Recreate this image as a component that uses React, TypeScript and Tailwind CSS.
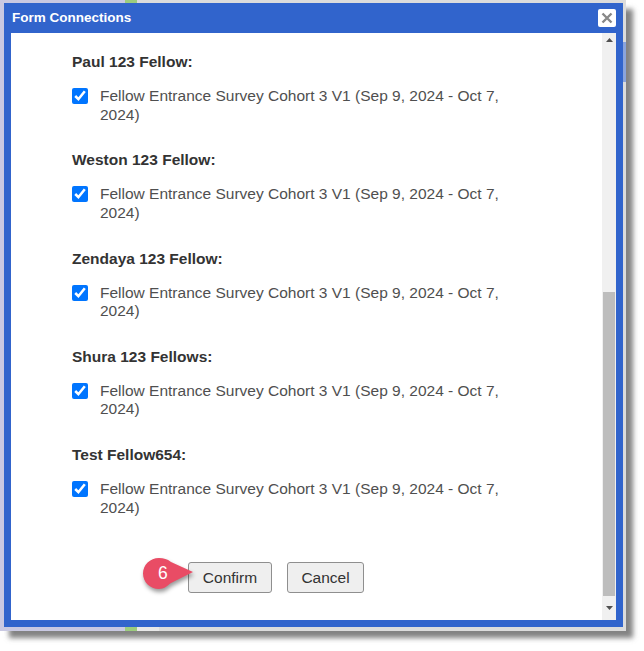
import React from "react";

const people = ["Paul 123 Fellow:", "Weston 123 Fellow:", "Zendaya 123 Fellow:", "Shura 123 Fellows:", "Test Fellow654:"];

function Block({ name }: { name: string }) {
  return (
    <div className="h-[98.25px] pl-[61px]">
      <div className="text-[15.5px] leading-[18px] font-bold text-[#333333]">{name}</div>
      <div className="mt-[16px] flex items-start">
        <input type="checkbox" defaultChecked readOnly className="mt-[1px] h-[16px] w-[16px] shrink-0 accent-[#0075ff]" />
        <span className="ml-[12px] w-[420px] text-[15.5px] leading-[18.5px] text-[#4f4f4f]">
          Fellow Entrance Survey Cohort 3 V1 (Sep 9, 2024 - Oct 7, 2024)
        </span>
      </div>
    </div>
  );
}

export default function App() {
  return (
    <div className="h-[651px] w-[644px] overflow-hidden bg-white font-['Liberation_Sans',Arial,sans-serif]">
      <div className="relative h-[631px] w-[626px] bg-[#dcdcdc] pt-[3px] pl-[4px] pr-[3px] pb-[4px] shadow-[8px_8px_5px_-1px_rgba(90,90,90,0.75)]">
        <div className="absolute left-0 top-0 h-[3px] w-[125px] bg-[#c9c9e2]" />
        <div className="absolute left-[125px] top-0 h-[3px] w-[12px] bg-[#9ccc7e]" />
        <div className="absolute left-0 top-0 h-full w-[4px] bg-[#c9c9e2]" />
        <div className="absolute bottom-0 left-0 h-[4px] w-[125px] bg-[#c9c9e2]" />
        <div className="absolute bottom-0 left-[125px] h-[4px] w-[12px] bg-[#9ccc7e]" />
        <div className="absolute bottom-0 left-[137px] h-[4px] w-[22px] bg-[#e8e8e8]" />
        <div className="absolute right-0 top-[42px] h-[40px] w-[3px] bg-[#8aa4dc]" />
        <div className="relative flex h-[624px] flex-col bg-[#3164cc]">
          <div className="flex h-[30px] shrink-0 items-center justify-between pl-[8px] pr-[7px]">
            <span className="text-[13.5px] font-bold text-white">Form Connections</span>
            <span className="flex h-[18px] w-[18px] items-center justify-center rounded-[2px] bg-white">
              <svg width="12" height="12" viewBox="0 0 12 12">
                <path d="M1.5 1.5 10.5 10.5M10.5 1.5 1.5 10.5" stroke="#888888" strokeWidth="2.4" />
              </svg>
            </span>
          </div>
          <div className="mx-[7px] flex h-[587px] bg-white">
            <div className="min-w-0 flex-1 pt-[20px]">
              {people.map((p) => (
                <Block key={p} name={p} />
              ))}
              <div className="relative mt-[18px] flex gap-[15px] pl-[177px]">
                <button className="h-[31px] w-[84px] rounded-[3px] border border-[#8f8f8f] bg-[#efefef] text-[15.5px] text-[#333333]">Confirm</button>
                <button className="h-[31px] w-[77px] rounded-[3px] border border-[#8f8f8f] bg-[#efefef] text-[15.5px] text-[#333333]">Cancel</button>
                <svg className="absolute left-[128px] top-[-6px] drop-shadow-[1px_3px_2px_rgba(0,0,0,0.4)]" width="58" height="36" viewBox="0 0 58 36">
                  <path d="M20 2C25 2 28 3 32 6L54 16 32 27C28 30 25 33 20 33 11 33 4 26 4 17.5S11 2 20 2Z" fill="#e94c65" />
                </svg>
                <span className="absolute left-[147px] top-[1px] text-[17.5px] leading-[20px] text-white">6</span>
              </div>
            </div>
            <div className="flex w-[14px] shrink-0 flex-col bg-[#f0f0f0]">
              <div className="flex h-[14px] items-center justify-center">
                <svg width="7" height="4" viewBox="0 0 7 4"><path d="M3.5 0 7 4H0Z" fill="#505050" /></svg>
              </div>
              <div className="mt-[245px] mx-[1px] h-[304px] bg-[#bdbdbd]" />
              <div className="flex flex-1 items-center justify-center">
                <svg width="7" height="4" viewBox="0 0 7 4"><path d="M0 0H7L3.5 4Z" fill="#505050" /></svg>
              </div>
            </div>
          </div>
        </div>
      </div>
    </div>
  );
}
